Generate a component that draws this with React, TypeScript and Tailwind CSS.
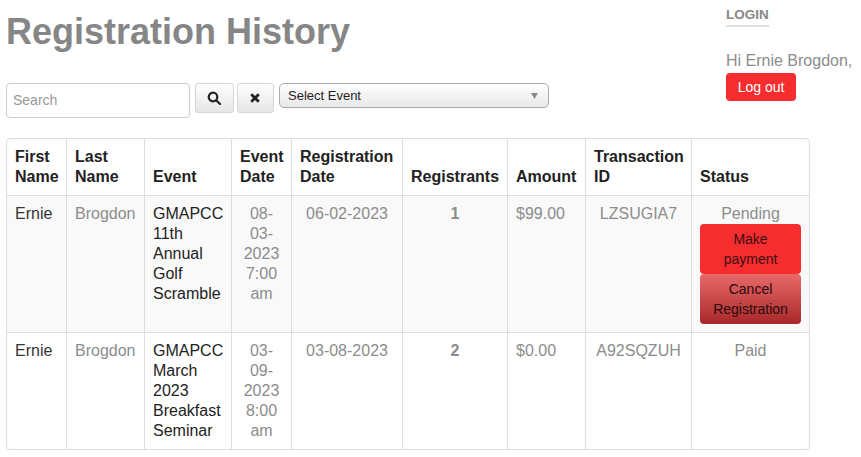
import React from "react";

const headers = [
  ["First Name", "w-[59px]"],
  ["Last Name", "w-[78px]"],
  ["Event", "w-[87px]"],
  ["Event Date", "w-[60px]"],
  ["Registration Date", "w-[111px]"],
  ["Registrants", "w-[105px]"],
  ["Amount", "w-[78px]"],
  ["Transaction ID", "w-[106px]"],
  ["Status", "w-[118px]"],
];

const td = "border-l border-t border-[#dddddd] p-2 align-top";
const first = "border-t border-[#dddddd] p-2 align-top";

function Row({
  alt,
  event,
  date,
  reg,
  count,
  amount,
  id,
  status,
}: {
  alt?: boolean;
  event: string;
  date: string;
  reg: string;
  count: string;
  amount: string;
  id: string;
  status: React.ReactNode;
}) {
  return (
    <tr className={alt ? "bg-[#f9f9f9]" : ""}>
      <td className={`${first} text-[#333333]`}>Ernie</td>
      <td className={td}>Brogdon</td>
      <td className={`${td} text-[#222222]`}>{event}</td>
      <td className={`${td} text-center`}>{date}</td>
      <td className={`${td} text-center`}>{reg}</td>
      <td className={`${td} text-center font-bold`}>{count}</td>
      <td className={td}>{amount}</td>
      <td className={`${td} text-center`}>{id}</td>
      <td className={`${td} text-center`}>{status}</td>
    </tr>
  );
}

export default function App() {
  return (
    <div className="relative h-[457px] w-[861px] overflow-hidden bg-white pl-[6px] font-['Liberation_Sans',Arial,sans-serif] text-[16px] leading-[20px] text-[#8c8c8c]">
      <div className="flex">
        <div className="w-[720px]">
          <h1 className="mt-[12px] text-[36px] font-bold leading-[40px] text-[#868686]">Registration History</h1>
          <div className="mt-[31px] flex items-start">
            <input
              placeholder="Search"
              className="h-[35px] w-[184px] rounded-[4px] border border-[#cccccc] bg-white px-[6px] pb-[2px] text-[14px] text-[#555555] placeholder:text-[#999999]"
            />
            <button className="ml-[5px] flex h-[30px] w-[39px] items-center justify-center rounded-[3px] border border-[#d5d5d5] bg-gradient-to-b from-white to-[#e6e6e6] pr-[2px] text-[#222222]">
              <svg width="14" height="14" viewBox="0 0 14 14" fill="none" stroke="#222222" strokeWidth="2.2">
                <circle cx="6" cy="6" r="4.3" />
                <path d="M9.2 9.2 13 13" strokeLinecap="round" />
              </svg>
            </button>
            <button className="ml-[3px] flex h-[30px] w-[37px] items-center justify-center rounded-[3px] border border-[#d5d5d5] bg-gradient-to-b from-white to-[#e6e6e6] pr-[2px]">
              <svg width="10" height="10" viewBox="0 0 10 10" fill="none" stroke="#222222" strokeWidth="2.8">
                <path d="M1.2 1.2 8.8 8.8M8.8 1.2 1.2 8.8" />
              </svg>
            </button>
            <div className="ml-[5px] flex h-[25px] w-[270px] items-center justify-between rounded-[5px] border border-[#aaaaaa] bg-gradient-to-b from-white to-[#e8e8e8] pl-[8px] pr-[10px] text-[13px] text-[#222222]">
              <span>Select Event</span>
              <svg width="7" height="6" viewBox="0 0 8 7" fill="#888888">
                <path d="M0 0h8L4 7z" />
              </svg>
            </div>
          </div>
        </div>
        <div className="pt-[4px]">
          <div className="inline-block border-b-2 border-[#e0e0e0] pb-[1px] text-[13.5px] font-bold leading-[18px] text-[#888888]">LOGIN</div>
          <div className="mt-[24px] whitespace-nowrap leading-[20px] text-[#8c8c8c]">Hi Ernie Brogdon,</div>
          <button className="mt-[2px] block h-[28px] w-[70px] rounded-[4px] bg-[#f62d2f] text-[14px] text-white">Log out</button>
        </div>
      </div>
      <div className="absolute left-[6px] top-[138px] w-[804px] overflow-hidden rounded-[4px] border border-[#dddddd]">
        <table className="w-[802px] table-fixed border-separate border-spacing-0">
          <colgroup>
            {headers.map(([h, w]) => (
              <col key={h} className={w} />
            ))}
          </colgroup>
          <thead>
            <tr>
              {headers.map(([h], i) => (
                <th
                  key={h}
                  className={`${i ? "border-l border-[#dddddd]" : ""} p-2 pr-0 text-left align-bottom font-bold text-[#222222]`}
                >
                  {h}
                </th>
              ))}
            </tr>
          </thead>
          <tbody>
            <Row
              alt
              event="GMAPCC 11th Annual Golf Scramble"
              date="08-03-2023 7:00 am"
              reg="06-02-2023"
              count="1"
              amount="$99.00"
              id="LZSUGIA7"
              status={
                <>
                  Pending
                  <button className="block h-[50px] w-full rounded-[4px] bg-[#f62d2f] px-[16px] text-[14px] leading-[20px] text-[#3a1010]">
                    Make payment
                  </button>
                  <button className="block h-[50px] w-full rounded-[4px] bg-gradient-to-b from-[#e8696a] to-[#a82729] text-[14px] leading-[20px] text-[#2a0a0a]">
                    Cancel Registration
                  </button>
                </>
              }
            />
            <Row
              event="GMAPCC March 2023 Breakfast Seminar"
              date="03-09-2023 8:00 am"
              reg="03-08-2023"
              count="2"
              amount="$0.00"
              id="A92SQZUH"
              status="Paid"
            />
          </tbody>
        </table>
      </div>
    </div>
  );
}
